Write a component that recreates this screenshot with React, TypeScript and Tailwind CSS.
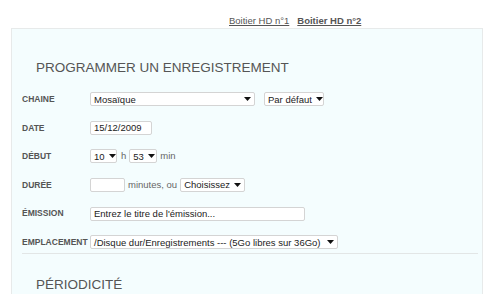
import type { ReactNode } from 'react'

const font = { fontFamily: '"Liberation Sans", Arial, sans-serif' }

function Select({ children, className = '' }: { children: ReactNode; className?: string }) {
  return (
    <div
      className={`flex h-[14px] items-center justify-between rounded-[2px] border border-[#d4d4d4] bg-white pl-[3px] pr-[3px] text-[9.5px] leading-none text-[#222] ${className}`}
    >
      <span className="whitespace-nowrap">{children}</span>
      <svg width="7" height="4" viewBox="0 0 7 4" className="ml-[4px] shrink-0">
        <path d="M0 0H7L3.5 4Z" fill="#111" />
      </svg>
    </div>
  )
}

function Input({ value = '', className = '' }: { value?: string; className?: string }) {
  return (
    <div
      className={`flex h-[14px] items-center rounded-[2px] border border-[#d4d4d4] bg-white px-[3px] text-[9.5px] leading-none text-[#222] ${className}`}
    >
      <span className="whitespace-nowrap">{value}</span>
    </div>
  )
}

function Row({ label, children }: { label: string; children: ReactNode }) {
  return (
    <div className="flex h-[28.6px] items-center">
      <div className="w-[68px] shrink-0 text-[8.5px] font-bold text-[#555]">{label}</div>
      <div className="flex items-center text-[9.5px] text-[#666]">{children}</div>
    </div>
  )
}

export default function App() {
  return (
    <div style={font} className="h-[294px] w-[500px] overflow-hidden bg-white">
      {/* onglets */}
      <div className="flex gap-[8px] pl-[229px] pt-[15px] text-[9.5px] leading-[12px] text-[#555]">
        <a className="underline">Boitier HD n°1</a>
        <a className="font-bold underline">Boitier HD n°2</a>
      </div>

      <div className="ml-[11px] mt-[1px] h-[300px] w-[472px] border border-[#e7eaea] bg-[#f4fdfe]">
        <h2 className="pl-[24px] pt-[30px] text-[13.5px] leading-[18px] text-[#555]">PROGRAMMER UN ENREGISTREMENT</h2>

        <div className="ml-[10px] mt-[8px] w-[456px]">
          <Row label="CHAINE">
            <Select className="w-[165px]">Mosaïque</Select>
            <Select className="ml-[9px] w-[60px]">Par défaut</Select>
          </Row>
          <Row label="DATE">
            <Input value="15/12/2009" className="w-[62px]" />
          </Row>
          <Row label="DÉBUT">
            <Select className="w-[27px]">10</Select>
            <span className="ml-[4px]">h</span>
            <Select className="ml-[3px] w-[28px]">53</Select>
            <span className="ml-[3px]">min</span>
          </Row>
          <Row label="DURÉE">
            <Input className="w-[35px]" />
            <span className="ml-[3px]">minutes, ou</span>
            <Select className="ml-[3px] w-[65px]">Choisissez</Select>
          </Row>
          <Row label="ÉMISSION">
            <Input value="Entrez le titre de l'émission..." className="w-[215px]" />
          </Row>
          <Row label="EMPLACEMENT">
            <Select className="w-[248px]">/Disque dur/Enregistrements --- (5Go libres sur 36Go)</Select>
          </Row>
          <div className="-mt-[4px] h-[1px] bg-[#e2e6e6]" />
        </div>

        <h2 className="pl-[24px] pt-[22px] text-[13.5px] leading-[18px] text-[#555]">PÉRIODICITÉ</h2>
      </div>
    </div>
  )
}
